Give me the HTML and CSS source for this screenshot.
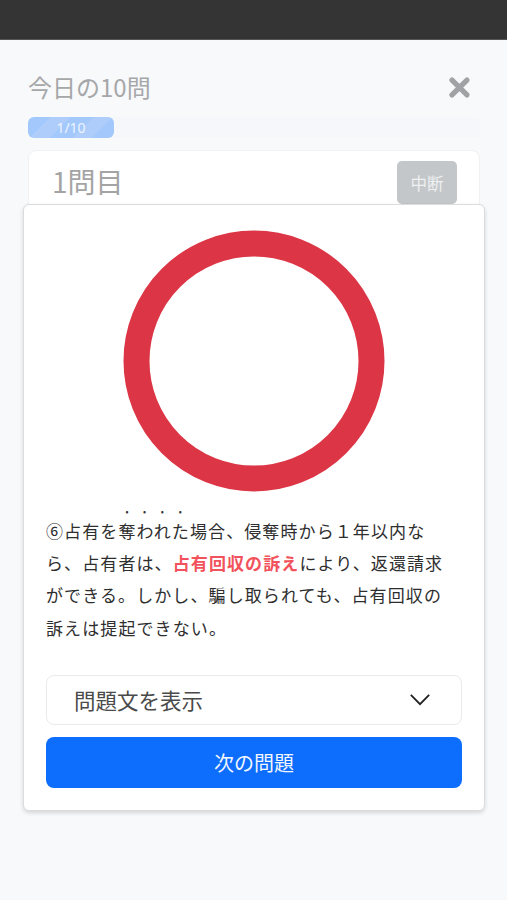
FILE: index.html
```html
<!DOCTYPE html>
<html lang="ja">
<head>
<meta charset="utf-8">
<title>今日の10問</title>
<link rel="stylesheet" href="styles.css">
</head>
<body>
<div class="topbar"></div>
<main class="page">
  <header class="head">
    <h1 class="title">今日の10問</h1>
    <svg class="close" viewBox="0 0 20 20" aria-label="閉じる"><path d="M3.5 3.5 16.5 16.5M16.5 3.5 3.5 16.5"/></svg>
  </header>
  <div class="progress"><div class="fill">1/10</div></div>
  <section class="card">
    <span class="num">1問目</span>
    <button class="stop">中断</button>
  </section>
</main>
<section class="modal">
  <div class="mark">
    <svg class="circle" viewBox="0 0 262 262"><circle cx="131" cy="131" r="117.5" /></svg>
  </div>
  <p class="text">⑥占有を<em class="dots">奪われた</em>場合、侵奪時から１年以内なら、占有者は、<strong class="hl">占有回収の訴え</strong>により、返還請求ができる。しかし、騙し取られても、占有回収の訴えは提起できない。</p>
  <div class="toggle">
    <span>問題文を表示</span>
    <svg class="chev" viewBox="0 0 24 14"><path d="M2 2 12 12 22 2"/></svg>
  </div>
  <button class="next">次の問題</button>
</section>
</body>
</html>
```
FILE: styles.css
```css
* { box-sizing: border-box; }
html, body { margin: 0; height: 900px; overflow: hidden; }
body {
  position: relative;
  background: #f8f9fb;
  font-family: "Noto Sans CJK JP", "Noto Sans", sans-serif;
  color: #333;
}
.topbar {
  height: 40px;
  background: #343434;
  border-bottom: 1px solid #555;
}
.page { padding: 29px 27px 0 28px; }
.head {
  display: flex;
  justify-content: space-between;
  align-items: center;
  height: 36px;
  padding-right: 9px;
}
.title {
  margin: 0;
  font-size: 24px;
  font-weight: 400;
  line-height: 36px;
  color: #a6a7a9;
}
.close { width: 23px; height: 23px; margin-top: 1px; }
.close path { fill: none; stroke: #a0a2a5; stroke-width: 4.6; stroke-linecap: round; }
.progress {
  margin-top: 12px;
  height: 21px;
  background: #f6f7fa;
  border-radius: 5px;
}
.fill {
  width: 86px;
  height: 21px;
  border-radius: 6px;
  background: repeating-linear-gradient(135deg, #a3c8fc 0 16px, #aecdfb 16px 30px);
  color: #eef4fe;
  font-family: "Noto Sans", sans-serif;
  font-size: 14px;
  line-height: 21px;
  text-align: center;
}
.card {
  display: flex;
  justify-content: space-between;
  align-items: flex-start;
  margin-top: 12px;
  height: 70px;
  padding: 10px 22px 0 23px;
  background: #fff;
  border: 1px solid #f0f1f3;
  border-radius: 8px;
}
.num {
  font-size: 28px;
  line-height: 40px;
  color: #a4a4a4;
}
.stop {
  width: 60px;
  height: 43px;
  border: 0;
  border-radius: 5px;
  background: #c3c7ca;
  color: #eef0f1;
  font: 400 16.5px "Noto Sans CJK JP", sans-serif;
}
.modal {
  position: absolute;
  top: 204px;
  left: 23px;
  width: 462px;
  height: 607px;
  padding: 0 22px;
  background: #fff;
  border: 1px solid #dcdcdc;
  border-radius: 6px;
  box-shadow: 0 2px 4px rgba(0,0,0,.14);
}
.mark {
  display: flex;
  justify-content: center;
  padding-top: 25px;
}
.circle { width: 262px; height: 262px; display: block; }
.circle circle { fill: none; stroke: #dc3545; stroke-width: 26; }
.text {
  margin: 13px 0 0;
  padding-right: 10px;
  font-size: 17px;
  line-height: 32.2px;
  letter-spacing: 1.1px;
  color: #2e2e2e;
}
.dots {
  font-style: normal;
  text-emphasis: filled dot #333;
  -webkit-text-emphasis: filled dot #333;
}
.hl { color: #f2525b; font-weight: 700; }
.toggle {
  display: flex;
  justify-content: space-between;
  align-items: center;
  margin-top: 31px;
  height: 50px;
  padding: 0 30px 0 27px;
  background: #fff;
  border: 1px solid #e9eaec;
  border-radius: 8px;
  font-size: 21.5px;
  line-height: 44px;
  color: #4a4a4a;
}
.chev { width: 22px; height: 13px; }
.chev path { fill: none; stroke: #222; stroke-width: 2; }
.next {
  display: block;
  width: 100%;
  height: 51px;
  margin-top: 12px;
  border: 0;
  border-radius: 8px;
  background: #0d6efd;
  color: #f3f7fe;
  font: 400 20px "Noto Sans CJK JP", sans-serif;
}
```
